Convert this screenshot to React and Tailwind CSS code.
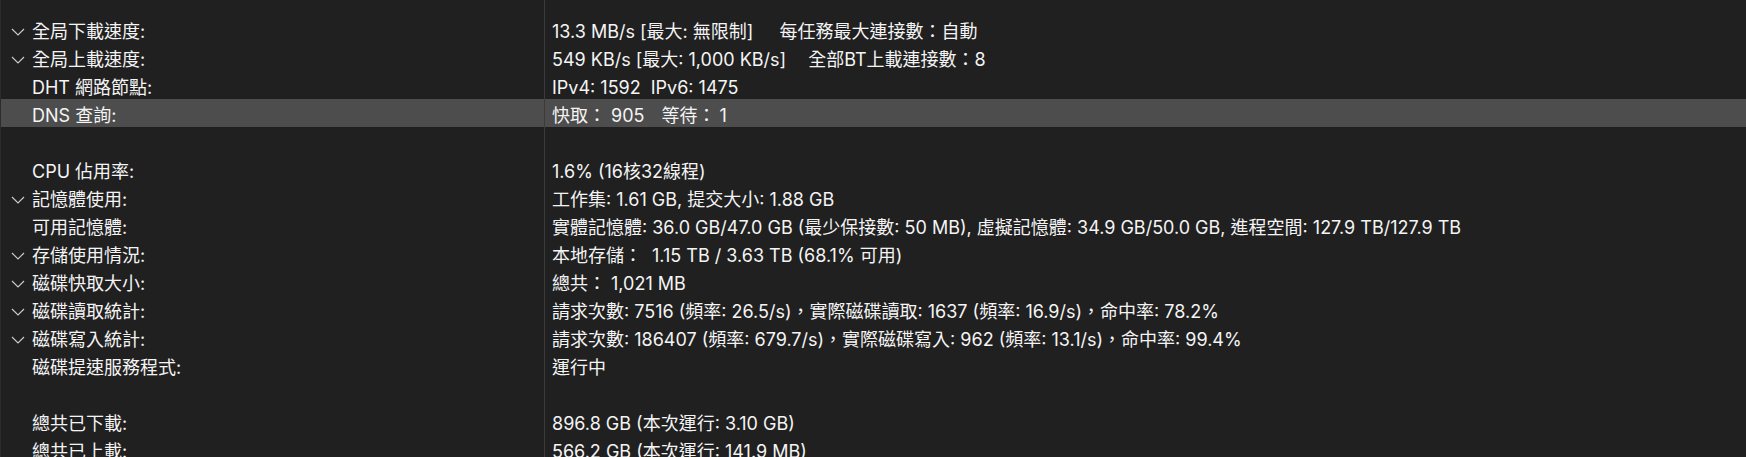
import React from "react";

const Chevron = () => (
  <svg width="14" height="8" viewBox="0 0 14 8" className="block">
    <path d="M1 1 L7 7 L13 1" fill="none" stroke="#c8c8c8" strokeWidth="1.2" />
  </svg>
);

const rows = [
  { chev: true, label: "全局下載速度:", value: (<>13.3 MB/s [最大: 無限制]<span className="inline-block w-[26px]" />每任務最大連接數：自動</>) },
  { chev: true, label: "全局上載速度:", value: (<>549 KB/s [最大: 1,000 KB/s]<span className="inline-block w-[22px]" />全部BT上載連接數：8</>) },
  { label: "DHT 網路節點:", value: (<>IPv4: 1592<span className="inline-block w-[10px]" />IPv6: 1475</>) },
  { label: "DNS 查詢:", hl: true, value: (<>快取：<span className="inline-block w-[5px]" />905<span className="inline-block w-[17px]" />等待：<span className="inline-block w-[4px]" />1</>) },
  { blank: true },
  { label: "CPU 佔用率:", value: "1.6% (16核32線程)" },
  { chev: true, label: "記憶體使用:", value: "工作集: 1.61 GB, 提交大小: 1.88 GB" },
  { label: "可用記憶體:", value: "實體記憶體: 36.0 GB/47.0 GB (最少保接數: 50 MB), 虛擬記憶體: 34.9 GB/50.0 GB, 進程空間: 127.9 TB/127.9 TB" },
  { chev: true, label: "存儲使用情況:", value: (<>本地存儲：<span className="inline-block w-[10px]" />1.15 TB / 3.63 TB (68.1% 可用)</>) },
  { chev: true, label: "磁碟快取大小:", value: (<>總共：<span className="inline-block w-[5px]" />1,021 MB</>) },
  { chev: true, label: "磁碟讀取統計:", value: "請求次數: 7516 (頻率: 26.5/s)，實際磁碟讀取: 1637 (頻率: 16.9/s)，命中率: 78.2%" },
  { chev: true, label: "磁碟寫入統計:", value: "請求次數: 186407 (頻率: 679.7/s)，實際磁碟寫入: 962 (頻率: 13.1/s)，命中率: 99.4%" },
  { label: "磁碟提速服務程式:", value: "運行中" },
  { blank: true },
  { label: "總共已下載:", value: "896.8 GB (本次運行: 3.10 GB)" },
  { label: "總共已上載:", value: "566.2 GB (本次運行: 141.9 MB)" },
];

export default function App() {
  return (
    <div
      className="w-[1746px] h-[457px] overflow-hidden bg-[#202020] text-[#f4f4f4] text-[18px] border-l border-[#2c2c2c]"
      style={{ fontFamily: '"Inter", "Noto Sans CJK TC", sans-serif' }}
    >
      <div className="flex h-[15px]">
        <div className="w-[543px] shrink-0" />
        <div className="flex-1 border-l border-[#3b3b3b]" />
      </div>
      {rows.map((r, i) => (
        <div key={i} className={`flex h-[28px] leading-[28px] ${r.hl ? "bg-[#4d4d4d]" : ""}`}>
          <div className="w-[543px] shrink-0 flex whitespace-nowrap">
            <div className="w-[31px] flex justify-end items-center pr-[7px] pt-[5px]">{r.chev ? <Chevron /> : null}</div>
            <span className="pt-[3px]">{r.label || ""}</span>
          </div>
          <div className="flex-1 h-full border-l border-[#3b3b3b] pl-[7px] whitespace-nowrap pt-[3px]">
            {r.value || ""}
          </div>
        </div>
      ))}
    </div>
  );
}
